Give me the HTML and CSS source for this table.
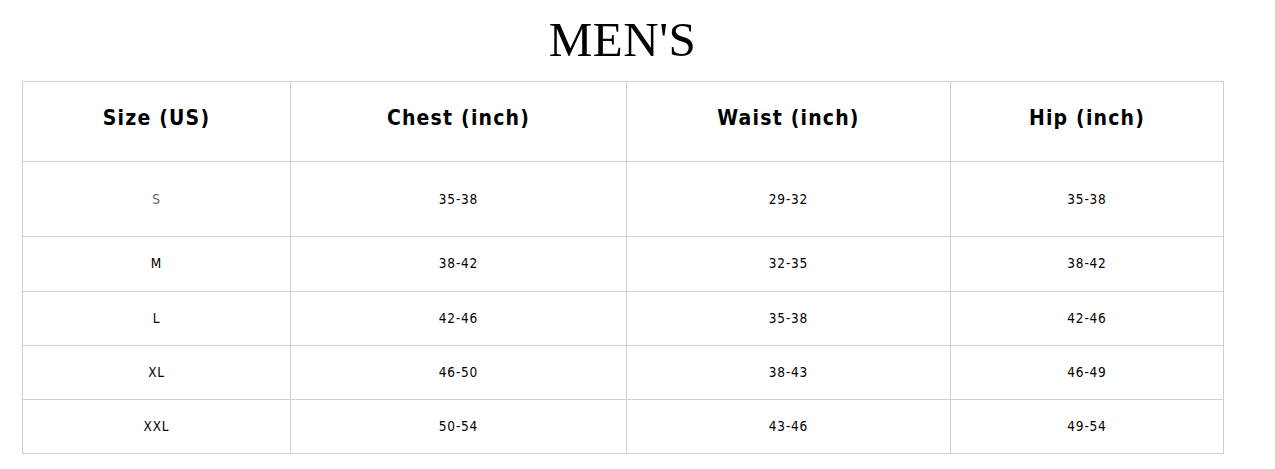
FILE: index.html
```html
<!DOCTYPE html>
<html>
<head>
<meta charset="utf-8">
<link rel="stylesheet" href="styles.css">
</head>
<body>
<div class="page">
  <h1 class="title">MEN'S</h1>
  <table class="chart">
    <colgroup>
      <col class="c1"><col class="c2"><col class="c3"><col class="c4">
    </colgroup>
    <thead>
      <tr class="head"><th>Size (US)</th><th>Chest (inch)</th><th>Waist (inch)</th><th>Hip (inch)</th></tr>
    </thead>
    <tbody>
      <tr class="first"><td class="muted">S</td><td>35-38</td><td>29-32</td><td>35-38</td></tr>
      <tr class="second"><td>M</td><td>38-42</td><td>32-35</td><td>38-42</td></tr>
      <tr><td>L</td><td>42-46</td><td>35-38</td><td>42-46</td></tr>
      <tr><td>XL</td><td>46-50</td><td>38-43</td><td>46-49</td></tr>
      <tr><td>XXL</td><td>50-54</td><td>43-46</td><td>49-54</td></tr>
    </tbody>
  </table>
</div>
</body>
</html>
```
FILE: styles.css
```css
html, body {
  margin: 0;
  padding: 0;
  background: #fff;
}
.page {
  padding: 0 52px 0 22px;
}
.title {
  margin: 0;
  height: 81px;
  box-sizing: border-box;
  padding-top: 14px;
  text-align: center;
  font-family: "Liberation Serif", serif;
  font-weight: normal;
  font-size: 49px;
  line-height: 52px;
  letter-spacing: 0.5px;
  color: #000;
}
.chart {
  width: 1201px;
  border-collapse: collapse;
  table-layout: fixed;
  font-family: "DejaVu Sans Condensed", "DejaVu Sans", sans-serif;
  color: #000;
}
.c1 { width: 268px; }
.c2 { width: 336px; }
.c3 { width: 324px; }
.c4 { width: 273px; }
.chart th, .chart td {
  border: 1px solid #cfcfcf;
  text-align: center;
  padding: 0;
}
.chart th {
  height: 71px;
  font-size: 21px;
  font-weight: bold;
  letter-spacing: 1.2px;
  vertical-align: middle;
  padding-bottom: 8px;
}
.chart td {
  height: 51px;
  padding-bottom: 2px;
  font-size: 13.5px;
  letter-spacing: 0.8px;
}
.chart tr.first td {
  height: 73px;
  padding-bottom: 1px;
}
.chart tr.second td {
  height: 52px;
}
.muted {
  color: #666;
}
```
